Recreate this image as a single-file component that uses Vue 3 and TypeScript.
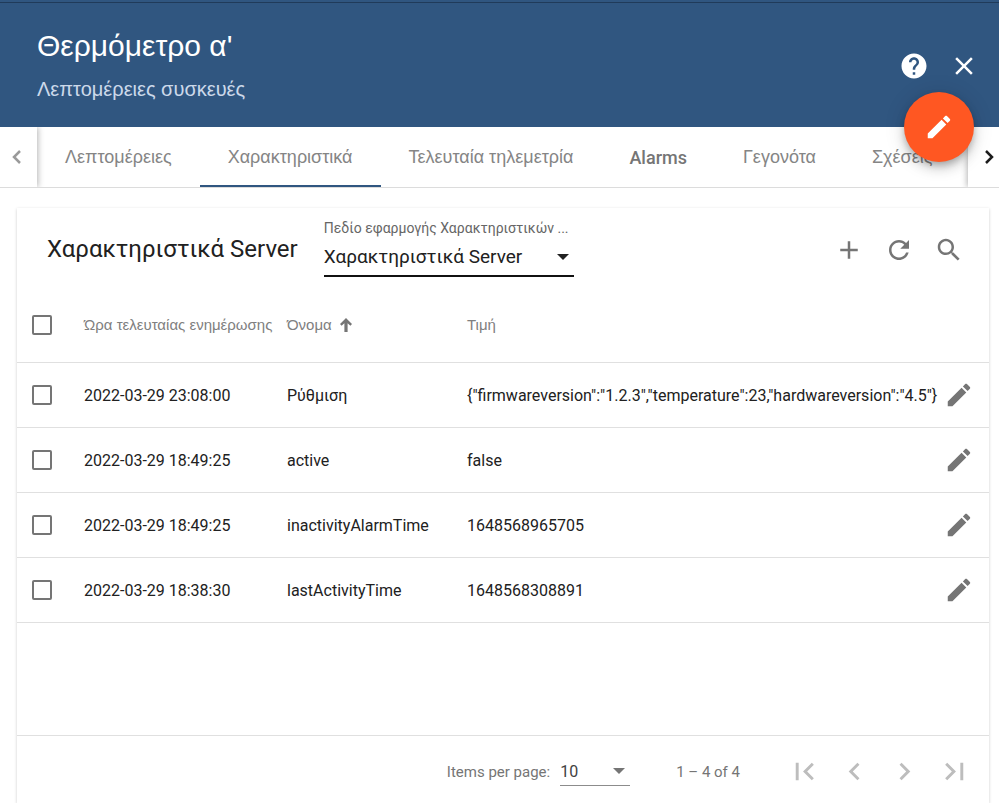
<script setup lang="ts">
import { ref } from 'vue'

interface Attribute {
  time: string
  name: string
  value: string
}

const icons = {
  pencil:
    'M3 17.25V21h3.75L17.81 9.94l-3.75-3.75L3 17.25zM20.71 7.04c.39-.39.39-1.02 0-1.41l-2.34-2.34c-.39-.39-1.02-.39-1.41 0l-1.83 1.83 3.75 3.75 1.83-1.83z',
  close:
    'M19 6.41L17.59 5 12 10.59 6.41 5 5 6.41 10.59 12 5 17.59 6.41 19 12 13.41 17.59 19 19 17.59 13.41 12z',
  help: 'M12 2C6.48 2 2 6.48 2 12s4.48 10 10 10 10-4.48 10-10S17.52 2 12 2zm1 17h-2v-2h2v2zm2.07-7.75l-.9.92C13.45 12.9 13 13.5 13 15h-2v-.5c0-1.1.45-2.1 1.17-2.83l1.24-1.26c.37-.36.59-.86.59-1.41 0-1.1-.9-2-2-2s-2 .9-2 2H8c0-2.21 1.79-4 4-4s4 1.79 4 4c0 .88-.36 1.68-.93 2.25z',
  add: 'M19 13h-6v6h-2v-6H5v-2h6V5h2v6h6v2z',
  refresh:
    'M17.65 6.35C16.2 4.9 14.21 4 12 4c-4.42 0-7.99 3.58-7.99 8s3.57 8 7.99 8c3.73 0 6.84-2.55 7.73-6h-2.08c-.82 2.33-3.04 4-5.65 4-3.31 0-6-2.69-6-6s2.69-6 6-6c1.66 0 3.14.69 4.22 1.78L13 11h7V4l-2.35 2.35z',
  search:
    'M15.5 14h-.79l-.28-.27C15.41 12.59 16 11.11 16 9.5 16 5.91 13.09 3 9.5 3S3 5.91 3 9.5 5.91 16 9.5 16c1.61 0 3.09-.59 4.23-1.57l.27.28v.79l5 4.99L20.49 19l-4.99-5zm-6 0C7.01 14 5 11.99 5 9.5S7.01 5 9.5 5 14 7.01 14 9.5 11.99 14 9.5 14z',
}

const pageButtons = [
  { label: 'First page', path: 'M18.41 16.59L13.82 12l4.59-4.59L17 6l-6 6 6 6zM6 6h2v12H6z' },
  { label: 'Previous page', path: 'M15.41 7.41L14 6l-6 6 6 6 1.41-1.41L10.83 12z' },
  { label: 'Next page', path: 'M10 6L8.59 7.41 13.17 12l-4.58 4.59L10 18l6-6z' },
  { label: 'Last page', path: 'M5.59 7.41L10.18 12l-4.59 4.59L7 18l6-6-6-6zM16 6h2v12h-2z' },
]

const tabs = ['Λεπτομέρειες', 'Χαρακτηριστικά', 'Τελευταία τηλεμετρία', 'Alarms', 'Γεγονότα', 'Σχέσεις']
const activeTab = ref('Χαρακτηριστικά')

const rows: Attribute[] = [
  { time: '2022-03-29 23:08:00', name: 'Ρύθμιση', value: '{"firmwareversion":"1.2.3","temperature":23,"hardwareversion":"4.5"}' },
  { time: '2022-03-29 18:49:25', name: 'active', value: 'false' },
  { time: '2022-03-29 18:49:25', name: 'inactivityAlarmTime', value: '1648568965705' },
  { time: '2022-03-29 18:38:30', name: 'lastActivityTime', value: '1648568308891' },
]
const selected = ref<string[]>([])

function toggleAll(event: Event) {
  selected.value = (event.target as HTMLInputElement).checked ? rows.map((r) => r.name) : []
}
</script>

<template>
  <div class="panel">
    <header class="header">
      <div class="titles">
        <h1>Θερμόμετρο α'</h1>
        <p>Λεπτομέρειες συσκευές</p>
      </div>
      <div class="header-actions">
        <button class="icon-btn" type="button" aria-label="Help">
          <svg class="icon" viewBox="0 0 24 24"><path :d="icons.help" /></svg>
        </button>
        <button class="icon-btn" type="button" aria-label="Close">
          <svg class="icon" viewBox="0 0 24 24"><path :d="icons.close" /></svg>
        </button>
      </div>
      <button class="fab" type="button" aria-label="Edit">
        <svg class="icon" viewBox="0 0 24 24"><path :d="icons.pencil" /></svg>
      </button>
    </header>

    <nav class="tabbar">
      <button class="pager prev" type="button" aria-label="Previous tabs">
        <svg viewBox="0 0 10 14"><path d="M8 1L2 7L8 13" /></svg>
      </button>
      <div class="tabs" role="tablist">
        <button
          v-for="tab in tabs"
          :key="tab"
          type="button"
          role="tab"
          class="tab"
          :class="{ active: tab === activeTab, latin: tab === 'Alarms' }"
          :aria-selected="tab === activeTab"
          @click="activeTab = tab"
        >
          {{ tab }}
        </button>
      </div>
      <button class="pager next" type="button" aria-label="Next tabs">
        <svg viewBox="0 0 10 14"><path d="M2 1L8 7L2 13" /></svg>
      </button>
    </nav>

    <main class="content">
      <section class="card">
        <div class="toolbar">
          <h2>Χαρακτηριστικά Server</h2>
          <div class="scope">
            <label for="scope">Πεδίο εφαρμογής Χαρακτηριστικών ...</label>
            <div class="select-box">
              <select id="scope">
                <option>Χαρακτηριστικά Server</option>
              </select>
              <svg class="caret" viewBox="0 0 12 6"><path d="M0 0h12L6 6z" /></svg>
            </div>
          </div>
          <div class="toolbar-actions">
            <button class="icon-btn" type="button" aria-label="Add">
              <svg class="icon" viewBox="0 0 24 24"><path :d="icons.add" /></svg>
            </button>
            <button class="icon-btn" type="button" aria-label="Refresh">
              <svg class="icon" viewBox="0 0 24 24"><path :d="icons.refresh" /></svg>
            </button>
            <button class="icon-btn" type="button" aria-label="Search">
              <svg class="icon" viewBox="0 0 24 24"><path :d="icons.search" /></svg>
            </button>
          </div>
        </div>

        <div class="table-area">
          <table>
            <colgroup>
              <col class="col-check" />
              <col class="col-time" />
              <col class="col-name" />
              <col />
              <col class="col-edit" />
            </colgroup>
            <thead>
              <tr>
                <th class="check">
                  <input
                    type="checkbox"
                    aria-label="Select all"
                    :checked="selected.length === rows.length"
                    @change="toggleAll"
                  />
                </th>
                <th>Ώρα τελευταίας ενημέρωσης</th>
                <th aria-sort="ascending">
                  <button class="sort" type="button">
                    Όνομα
                    <svg viewBox="0 0 12 14"><path d="M6 0L12 6L10.400 7.800L7.600 5.200V14H4.400V5.200L1.600 7.800L0 6z" /></svg>
                  </button>
                </th>
                <th>Τιμή</th>
                <th></th>
              </tr>
            </thead>
            <tbody>
              <tr v-for="row in rows" :key="row.name">
                <td class="check">
                  <input v-model="selected" type="checkbox" :value="row.name" :aria-label="row.name" />
                </td>
                <td>{{ row.time }}</td>
                <td>{{ row.name }}</td>
                <td>{{ row.value }}</td>
                <td>
                  <button class="edit" type="button" aria-label="Edit">
                    <svg class="icon" viewBox="0 0 24 24"><path :d="icons.pencil" /></svg>
                  </button>
                </td>
              </tr>
            </tbody>
          </table>
        </div>

        <footer class="paginator">
          <label for="page-size">Items per page:</label>
          <div class="page-size">
            <select id="page-size">
              <option>10</option>
            </select>
            <svg class="caret" viewBox="0 0 12 6"><path d="M0 0h12L6 6z" /></svg>
          </div>
          <span class="range">1 – 4 of 4</span>
          <div class="page-buttons">
            <button v-for="b in pageButtons" :key="b.label" class="icon-btn" type="button" disabled :aria-label="b.label">
              <svg class="icon" viewBox="0 0 24 24"><path :d="b.path" /></svg>
            </button>
          </div>
        </footer>
      </section>
    </main>
  </div>
</template>

<style>
body {
  margin: 0;
}
</style>

<style scoped>
* {
  box-sizing: border-box;
}
.panel {
  display: flex;
  flex-direction: column;
  height: 100vh;
  overflow: hidden;
  background: #fff;
  color: #212121;
  font-family: Roboto, "Liberation Sans", sans-serif;
  font-size: 16px;
}
button {
  display: flex;
  align-items: center;
  justify-content: center;
  padding: 0;
  border: 0;
  background: none;
  color: inherit;
  font: inherit;
  cursor: pointer;
}
svg {
  display: block;
  flex: none;
  fill: currentColor;
}
.icon {
  width: 30px;
  height: 30px;
}
.icon-btn {
  width: 50px;
  height: 50px;
}
select {
  width: 100%;
  padding: 0;
  border: 0;
  outline: 0;
  background: none;
  color: inherit;
  font: inherit;
  appearance: none;
}
.caret {
  position: absolute;
  right: 5px;
  top: 50%;
  width: 12px;
  height: 6px;
  margin-top: -3px;
  pointer-events: none;
}

.header {
  position: relative;
  z-index: 2;
  display: flex;
  flex: none;
  align-items: center;
  justify-content: space-between;
  height: 127px;
  padding: 5px 10px 0 37px;
  background: linear-gradient(#305680 2px, #203b5a 2px, #203b5a 3px, #305680 3px);
  color: #fff;
}
.titles {
  padding-bottom: 2px;
  font-family: "Liberation Sans", Arial, sans-serif;
}
h1 {
  margin: 0;
  font-size: 30px;
  font-weight: 400;
  line-height: 40px;
}
.titles p {
  margin: 8px 0 0;
  color: #ccd9ea;
  font-size: 20px;
  line-height: 30px;
}
.header-actions {
  display: flex;
}
.fab {
  position: absolute;
  right: 25px;
  bottom: -35px;
  width: 70px;
  height: 70px;
  border-radius: 50%;
  background: #ff5722;
  box-shadow: 0 4px 6px -1px rgba(0, 0, 0, 0.2), 0 7px 12px rgba(0, 0, 0, 0.14), 0 1px 22px rgba(0, 0, 0, 0.12);
}

.tabbar {
  display: flex;
  flex: none;
  height: 61px;
  border-bottom: 1px solid #dcdcdc;
}
.pager {
  z-index: 1;
  flex: none;
}
.pager svg {
  width: 10px;
  height: 14px;
  fill: none;
  stroke: currentColor;
  stroke-width: 2.5;
}
.prev {
  width: 37px;
  padding-right: 4px;
  color: #9a9a9a;
  box-shadow: 1px 0 6px rgba(0, 0, 0, 0.3);
  clip-path: inset(0 -12px 0 0);
}
.next {
  width: 31px;
  padding-left: 10px;
  color: #1c1c1c;
  box-shadow: -1px 0 6px rgba(0, 0, 0, 0.3);
  clip-path: inset(0 0 0 -12px);
}
.tabs {
  display: flex;
  flex: 1;
  min-width: 0;
  overflow: hidden;
}
.tab {
  flex: none;
  padding: 2px 28px 0;
  border-bottom: 2px solid transparent;
  color: #858585;
  font-family: "Liberation Sans", Arial, sans-serif;
  font-size: 18px;
  white-space: nowrap;
}
.tab.latin {
  color: #757575;
  font-family: Roboto, sans-serif;
  font-weight: 500;
}
.tab.active {
  border-bottom-color: #305680;
}

.content {
  display: flex;
  flex: 1;
  min-height: 0;
  padding: 20px 10px 0 17px;
}
.card {
  display: flex;
  flex: 1;
  flex-direction: column;
  min-width: 0;
  box-shadow: 0 1px 3px rgba(0, 0, 0, 0.2);
}
.toolbar {
  display: flex;
  flex: none;
  align-items: flex-start;
  height: 80px;
  padding: 0 15px 0 30px;
}
h2 {
  margin: 0 26px 0 0;
  font-size: 24px;
  font-weight: 400;
  line-height: 82px;
  white-space: nowrap;
}
.scope {
  width: 250px;
  padding-top: 10px;
}
.scope label {
  display: block;
  color: #666;
  font-size: 14px;
  line-height: 20px;
  white-space: nowrap;
}
.select-box {
  position: relative;
  height: 39px;
  border-bottom: 2px solid #111;
  font-size: 19px;
}
.select-box select {
  height: 36px;
}
.toolbar-actions {
  display: flex;
  margin-left: auto;
  padding-top: 17px;
  color: #757575;
}

.table-area {
  flex: 1;
  min-height: 0;
  overflow: hidden;
}
table {
  width: 100%;
  table-layout: fixed;
  border-collapse: separate;
  border-spacing: 0;
}
.col-check {
  width: 67px;
}
.col-time {
  width: 203px;
}
.col-name {
  width: 180px;
}
.col-edit {
  width: 45px;
}
th,
td {
  height: 65px;
  padding: 0;
  border-bottom: 1px solid #e0e0e0;
  text-align: left;
  vertical-align: middle;
  white-space: nowrap;
}
th {
  height: 75px;
  padding-bottom: 1px;
  color: #808080;
  font-family: "Liberation Sans", Arial, sans-serif;
  font-size: 15px;
  font-weight: 400;
}
.check {
  padding-left: 15px;
}
input[type='checkbox'] {
  display: block;
  width: 20px;
  height: 20px;
  margin: 0;
  border: 2px solid #757575;
  border-radius: 2px;
  background: #fff;
  appearance: none;
}
input[type='checkbox']:checked {
  border-color: #305680;
  background: #305680;
}
.sort {
  gap: 8px;
}
.sort svg {
  width: 12px;
  height: 14px;
  color: #757575;
}
.edit {
  color: #757575;
}

.paginator {
  display: flex;
  flex: none;
  align-items: center;
  justify-content: flex-end;
  height: 68px;
  padding: 4px 10px 0 0;
  border-top: 1px solid #e0e0e0;
  color: #757575;
  font-size: 15px;
}
.page-size {
  position: relative;
  width: 70px;
  margin: 0 46px 0 10px;
  border-bottom: 1px solid #8c8c8c;
}
.page-size select {
  height: 28px;
  color: #424242;
  font-size: 16px;
}
.range {
  margin-right: 39px;
}
.page-buttons {
  display: flex;
  color: #bdbdbd;
}
.page-buttons .icon {
  width: 35px;
  height: 35px;
}
</style>
